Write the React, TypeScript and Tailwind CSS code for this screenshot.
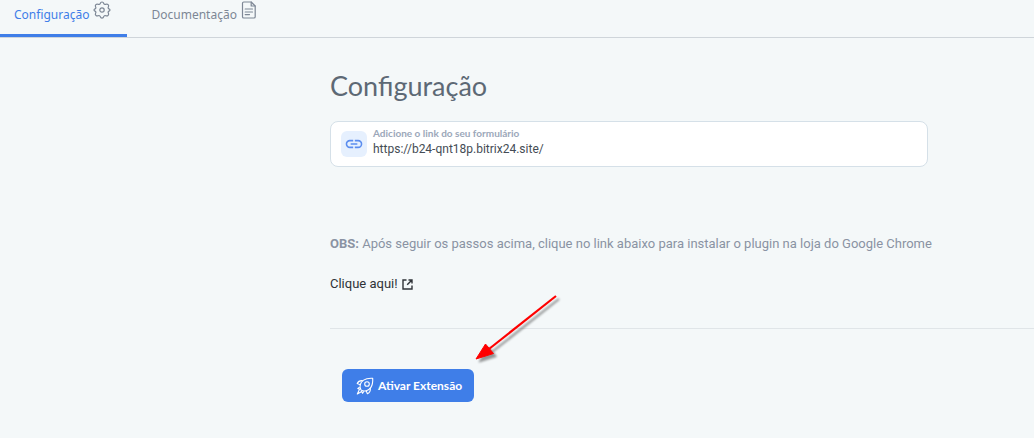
import type { ReactNode } from "react";

function GearIcon() {
  return (
    <svg width="18" height="18" viewBox="0 0 18 18" fill="none" stroke="currentColor" strokeWidth="1.200" strokeLinejoin="round">
      <path d="M7.400 2.100C7.700.6 10.300.6 10.600 2.100c.2 1.200 1.300 1.700 2.400 1.100 1.600-.7 3.300 1.200 2.400 2.600-.6.900-.2 1.700.6 2.100 1.300.5 1.300 1.700 0 2.200-.8.400-1.200 1.200-.6 2.100.9 1.400-.8 3.300-2.400 2.600-1.100-.6-2.200-.1-2.400 1.100-.3 1.500-2.900 1.500-3.200 0-.2-1.200-1.300-1.700-2.400-1.100-1.600.7-3.300-1.200-2.400-2.600.6-.9.200-1.700-.6-2.100-1.300-.5-1.300-1.700 0-2.200.8-.4 1.200-1.200.6-2.100-.9-1.400.8-3.300 2.400-2.600 1.100.6 2.200.1 2.400-1.100z" />
      <circle cx="9" cy="9" r="2.200" />
    </svg>
  );
}

function DocumentIcon() {
  return (
    <svg width="16" height="18" viewBox="0 0 16 18" fill="none" stroke="currentColor" strokeWidth="1.200" strokeLinejoin="round" strokeLinecap="round">
      <path d="M2.800 1h7.400l4 4v10.700a1.300 1.300 0 0 1-1.300 1.300H2.800a1.300 1.300 0 0 1-1.300-1.300V2.300A1.300 1.300 0 0 1 2.800 1z" />
      <path d="M10.200 1v4h4M4.200 8h7.300M4.200 11h7.300M4.200 13.600h4.300" />
    </svg>
  );
}

function LinkIcon() {
  return (
    <svg width="20" height="20" viewBox="0 0 24 24" fill="currentColor">
      <path d="M3.900 12c0-1.710 1.390-3.100 3.100-3.100h4V7H7a5 5 0 0 0 0 10h4v-1.900H7c-1.710 0-3.100-1.390-3.100-3.100zM8 13h8v-2H8v2zm9-6h-4v1.900h4a3.100 3.100 0 0 1 0 6.200h-4V17h4a5 5 0 0 0 0-10z" />
    </svg>
  );
}

function ExternalIcon() {
  return (
    <svg width="11" height="11" viewBox="0 0 11 11" fill="none" stroke="currentColor" strokeWidth="1.400">
      <path d="M4.500 1H1v9h9V6.500M6.500 1H10v3.500M10 1 5.200 5.800" />
    </svg>
  );
}

function RocketIcon() {
  return (
    <svg width="18" height="18" viewBox="0 0 18 18" fill="none" stroke="currentColor" strokeWidth="1.100" strokeLinecap="round" strokeLinejoin="round">
      <path d="M5 13C2.800 9.600 4.400 5.300 7.600 3.100 10 1.500 13.300 1.100 16.700 1.300c.2 3.400-.2 6.700-1.800 9.100C12.700 13.600 8.400 15.200 5 13z" />
      <circle cx="11" cy="7" r="2.300" />
      <path d="M6.800 3.700C4 3.300 2.200 4.400 1.200 6.600l3 1.200M14.300 11.200c.4 2.800-.7 4.600-2.900 5.600l-1.200-3M3.300 10.500l-1.500 1 1.700.8L1.300 17l4.400-2.400.9 1.700 1-1.600" />
    </svg>
  );
}

type TabProps = {
  label: string;
  icon: ReactNode;
  active?: boolean;
};

function Tab({ label, icon, active }: TabProps) {
  return (
    <button
      type="button"
      role="tab"
      aria-selected={!!active}
      className={`flex h-[37px] items-start gap-1 border-b-3 pr-4 pl-3.5 font-['Noto_Sans'] text-xs ${
        active ? "border-[#3f7ee8] text-[#3f7ee8]" : "border-transparent text-[#7d8795]"
      }`}
    >
      <span className="pt-1.5 leading-[18px]">{label}</span>
      <span className="pt-px text-[#7d8795]">{icon}</span>
    </button>
  );
}

function Arrow() {
  return (
    <svg
      className="pointer-events-none absolute -top-[76px] left-[133px]"
      width="90"
      height="74"
      viewBox="0 0 90 74"
      style={{ filter: "drop-shadow(3px 3px 1px rgb(0 0 0 / 0.4))" }}
    >
      <path d="M81 3 14 56" stroke="#fe0000" strokeWidth="2.200" />
      <path d="M1 66 10.500 51 18.500 60.500z" fill="#fe0000" stroke="#fe0000" />
    </svg>
  );
}

export default function App() {
  return (
    <div className="min-h-screen overflow-hidden bg-[#f4f8f9] font-['Roboto',sans-serif]">
      <div role="tablist" className="flex gap-2.5 border-b border-[#cfd5da]">
        <Tab label="Configuração" icon={<GearIcon />} active />
        <Tab label="Documentação" icon={<DocumentIcon />} />
      </div>

      <main className="pt-[30px] pl-[330px]">
        <h1 className="font-['Lato'] text-[27px] leading-9 text-[#5d6975]">
          Configuração
        </h1>

        <div className="mt-[17px] flex h-[46px] max-w-[598px] items-center gap-1.5 rounded-lg border border-[#d5e0e8] bg-white px-2.5">
          <div className="flex size-[26px] items-center justify-center rounded-md bg-[#e6f0fe] text-[#5b8def]">
            <LinkIcon />
          </div>
          <div className="flex flex-1 flex-col pb-0.5">
            <label htmlFor="form-link" className="font-['Lato'] text-[10px] leading-3 font-bold text-[#9ba7b9]">
              Adicione o link do seu formulário
            </label>
            <input
              id="form-link"
              type="text"
              defaultValue="https://b24-qnt18p.bitrix24.site/"
              className="h-5 w-full bg-transparent text-xs text-[#444c55] outline-none"
            />
          </div>
        </div>

        <p className="mt-[67px] text-[13px] leading-5 whitespace-nowrap text-[#8a93a3]">
          <b>OBS:</b> Após seguir os passos acima, clique no link abaixo para instalar o plugin na loja do Google Chrome
        </p>
        <a href="#" className="mt-5 flex w-fit items-center gap-1 text-[13px] leading-5 text-[#2f3338]">
          Clique aqui!
          <ExternalIcon />
        </a>

        <hr className="mt-[34px] border-[#e0e5e8]" />

        <div className="relative mt-10 ml-3 w-fit">
          <button
            type="button"
            className="flex h-[33px] items-center gap-1 rounded-md bg-[#3f7ee8] pr-3 pl-3.5 font-['Lato'] text-xs font-bold text-white"
          >
            <RocketIcon />
            Ativar Extensão
          </button>
          <Arrow />
        </div>
      </main>
    </div>
  );
}
